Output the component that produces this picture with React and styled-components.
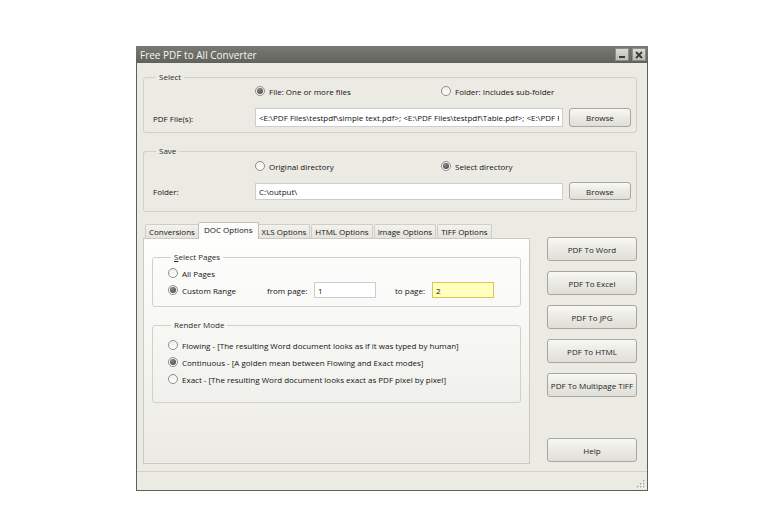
import React from 'react';
import styled, { createGlobalStyle, css } from 'styled-components';

const GlobalStyle = createGlobalStyle`
  html, body {
    margin: 0;
    background: #ffffff;
  }
  body {
    font-family: "Open Sans", "Noto Sans", "Liberation Sans", sans-serif;
    font-size: 8px;
    color: #141414;
  }
`;

const Page = styled.div`
  padding: 46px 0 0 136px;
`;

const Window = styled.div`
  width: 512px;
  height: 445px;
  box-sizing: border-box;
  border: 1px solid #5f5f5a;
  border-top: none;
  background: #ebeae3;
  display: flex;
  flex-direction: column;
`;

const TitleBar = styled.div`
  height: 17px;
  display: flex;
  align-items: center;
  justify-content: space-between;
  padding: 0 2px 0 4px;
  margin: 0 -1px;
  background: linear-gradient(#7a7a75, #62625d);
  color: #f6f6f2;
  font-size: 10px;
`;

const TitleButtons = styled.div`
  display: flex;
  gap: 3px;
`;

const TitleButton = styled.div`
  width: 14px;
  height: 13px;
  box-sizing: border-box;
  border: 1px solid #8d8d88;
  background: linear-gradient(#dcdcd6, #bcbcb6);
  display: flex;
  align-items: center;
  justify-content: center;
`;

const Body = styled.div`
  flex: 1;
  display: flex;
  flex-direction: column;
  padding: 9px 10px 0 6px;
`;

const Group = styled.fieldset`
  margin: 0;
  min-width: 0;
  box-sizing: border-box;
  height: ${p => p.$h};
  border: 1px solid #d2d0c7;
  border-radius: 3px;
  padding: ${p => p.$pad || '2px 5px 0 9px'};
  & + & {
    margin-top: ${p => p.$gap || '5px'};
  }
`;

const Legend = styled.legend`
  padding: 0 3px;
  margin-left: 3px;
  height: 10px;
  line-height: 10px;
  color: #2a2a2a;
`;

const RadioRow = styled.div`
  display: flex;
  align-items: center;
  height: 14px;
  padding-left: 102px;
`;

const Option = styled.label`
  display: flex;
  align-items: center;
  gap: 4px;
  height: 14px;
  width: ${p => p.$width || 'auto'};
  white-space: nowrap;
`;

const Radio = styled.span`
  width: 10px;
  height: 10px;
  border-radius: 50%;
  box-sizing: border-box;
  border: 1px solid #8e8e8a;
  background: linear-gradient(#eeeeec, #ffffff);
  display: flex;
  align-items: center;
  justify-content: center;
  flex: none;
  ${p => p.$checked && css`
    &::after {
      content: '';
      width: 6px;
      height: 6px;
      border-radius: 50%;
      background: radial-gradient(circle at 40% 35%, #8a8a8a, #3a3a3a);
    }
  `}
`;

const FieldRow = styled.div`
  display: grid;
  grid-template-columns: 96px 1fr 62px;
  column-gap: 6px;
  align-items: center;
  margin-top: ${p => p.$top || '10px'};
`;

const FieldLabel = styled.span`
  padding-top: 1px;
`;

const TextBox = styled.input`
  height: ${p => p.$h || '19px'};
  width: ${p => p.$w || 'auto'};
  box-sizing: border-box;
  border: 1px solid ${p => (p.$highlight ? '#d9c659' : '#cbcdcf')};
  background: ${p => (p.$highlight ? '#ffffbe' : '#ffffff')};
  padding: 0 3px;
  margin: 0;
  font: inherit;
  color: #111;
  outline: none;
  min-width: 0;
`;

const Button = styled.button`
  height: ${p => p.$h || '19px'};
  box-sizing: border-box;
  border: 1px solid #a6a59e;
  border-radius: 3px;
  background: linear-gradient(#f8f8f5, #e9e8e2 55%, #dfded7);
  font: inherit;
  color: #1e1e1e;
  padding: 0;
  white-space: nowrap;
`;

const Lower = styled.div`
  flex: 1;
  display: flex;
  gap: 17px;
  margin-top: 10px;
  padding-bottom: 7px;
`;

const TabArea = styled.div`
  width: 387px;
  display: flex;
  flex-direction: column;
`;

const TabStrip = styled.div`
  display: flex;
  align-items: flex-end;
  height: 16px;
  flex: none;
  padding-left: 2px;
  gap: 1px;
`;

const Tab = styled.div`
  height: 14px;
  box-sizing: border-box;
  padding: 0 3px;
  border: 1px solid #cfcdc5;
  border-bottom: none;
  border-radius: 2px 2px 0 0;
  background: linear-gradient(#f3f2ed, #e3e2db);
  display: flex;
  align-items: center;
  white-space: nowrap;
  ${p => p.$active && css`
    height: 17px;
    margin: 0 -2px -1px;
    padding: 1px 5px 1px;
    position: relative;
    z-index: 1;
    border-color: #c2c0b7;
    background: #fcfcfb;
    align-items: flex-start;
  `}
`;

const Panel = styled.div`
  flex: 1;
  border: 1px solid #cbc9c0;
  background: linear-gradient(#fefefd 0%, #f6f6f3 45%, #ebeae4 100%);
  padding: 13px 8px 0 8px;
`;

const OptionList = styled.div`
  display: flex;
  flex-direction: column;
  gap: ${p => p.$gap || '3px'};
`;

const RangeRow = styled.div`
  display: flex;
  align-items: center;
  height: 14px;
`;

const RangeLabel = styled.span`
  width: ${p => p.$w};
  flex: none;
`;

const ButtonColumn = styled.div`
  width: 90px;
  display: flex;
  flex-direction: column;
  gap: 10px;
  margin-top: 15px;
`;

const HelpButton = styled(Button)`
  margin-top: auto;
  margin-bottom: 2px;
`;

const StatusBar = styled.div`
  height: 19px;
  box-sizing: border-box;
  border-top: 1px solid #d3d1c8;
  display: flex;
  justify-content: flex-end;
  align-items: flex-end;
  padding: 0 1px 1px 0;
`;

const Grip = () => (
  <svg width="10" height="10" viewBox="0 0 10 10">
    {[[8, 2], [8, 5], [5, 5], [8, 8], [5, 8], [2, 8]].map(([x, y]) => (
      <g key={`${x}-${y}`}>
        <rect x={x} y={y} width="1.5" height="1.5" fill="#ffffff" />
        <rect x={x - 1} y={y - 1} width="1.5" height="1.5" fill="#a9a8a1" />
      </g>
    ))}
  </svg>
);

const RadioOption = ({ checked, width, children }) => (
  <Option $width={width}>
    <Radio $checked={checked} />
    <span>{children}</span>
  </Option>
);

const tabs = ['Conversions', 'DOC Options', 'XLS Options', 'HTML Options', 'Image Options', 'TIFF Options'];
const actions = ['PDF To Word', 'PDF To Excel', 'PDF To JPG', 'PDF To HTML', 'PDF To Multipage TIFF'];

const App = () => (
  <>
    <GlobalStyle />
    <Page>
      <Window>
        <TitleBar>
          <span>Free PDF to All Converter</span>
          <TitleButtons>
            <TitleButton>
              <svg width="8" height="8" viewBox="0 0 8 8">
                <rect x="1" y="5" width="6" height="2" fill="#3a3a3a" />
              </svg>
            </TitleButton>
            <TitleButton>
              <svg width="8" height="8" viewBox="0 0 8 8">
                <path d="M1 1 L7 7 M7 1 L1 7" stroke="#3a3a3a" strokeWidth="1.8" />
              </svg>
            </TitleButton>
          </TitleButtons>
        </TitleBar>

        <Body>
          <Group $h="61px">
            <Legend>Select</Legend>
            <RadioRow>
              <RadioOption checked width="186px">File:  One or more files</RadioOption>
              <RadioOption>Folder: Includes sub-folder</RadioOption>
            </RadioRow>
            <FieldRow>
              <FieldLabel>PDF File(s):</FieldLabel>
              <TextBox
                readOnly
                value="<E:\PDF Files\testpdf\simple text.pdf>; <E:\PDF Files\testpdf\Table.pdf>; <E:\PDF Files\testpdf\other.pdf>"
              />
              <Button>Browse</Button>
            </FieldRow>
          </Group>

          <Group $h="66px" $pad="3px 5px 0 9px">
            <Legend>Save</Legend>
            <RadioRow>
              <RadioOption width="186px">Original directory</RadioOption>
              <RadioOption checked>Select directory</RadioOption>
            </RadioRow>
            <FieldRow $top="9px">
              <FieldLabel>Folder:</FieldLabel>
              <TextBox readOnly value="C:\output\" $h="17px" />
              <Button $h="18px">Browse</Button>
            </FieldRow>
          </Group>

          <Lower>
            <TabArea>
              <TabStrip>
                {tabs.map(t => (
                  <Tab key={t} $active={t === 'DOC Options'}>{t}</Tab>
                ))}
              </TabStrip>
              <Panel>
                <Group $h="55px" $pad="4px 8px 0 15px">
                  <Legend><u>S</u>elect Pages</Legend>
                  <OptionList>
                    <RadioOption>All Pages</RadioOption>
                    <RangeRow>
                      <RadioOption checked width="99px">Custom Range</RadioOption>
                      <RangeLabel $w="47px">from page:</RangeLabel>
                      <TextBox readOnly value="1" $w="62px" $h="16px" />
                      <RangeLabel $w="19px" />
                      <RangeLabel $w="37px">to page:</RangeLabel>
                      <TextBox readOnly value="2" $w="62px" $h="16px" $highlight />
                    </RangeRow>
                  </OptionList>
                </Group>

                <Group $h="83px" $pad="8px 8px 0 15px" $gap="13px">
                  <Legend>Render Mode</Legend>
                  <OptionList>
                    <RadioOption>Flowing - [The resulting Word document looks as if it was typed by human]</RadioOption>
                    <RadioOption checked>Continuous - [A golden mean between Flowing and Exact modes]</RadioOption>
                    <RadioOption>Exact - [The resulting Word document looks exact as PDF pixel by pixel]</RadioOption>
                  </OptionList>
                </Group>
              </Panel>
            </TabArea>

            <ButtonColumn>
              {actions.map(a => (
                <Button key={a} $h="24px">{a}</Button>
              ))}
              <HelpButton $h="24px">Help</HelpButton>
            </ButtonColumn>
          </Lower>
        </Body>

        <StatusBar>
          <Grip />
        </StatusBar>
      </Window>
    </Page>
  </>
);

export default App;
